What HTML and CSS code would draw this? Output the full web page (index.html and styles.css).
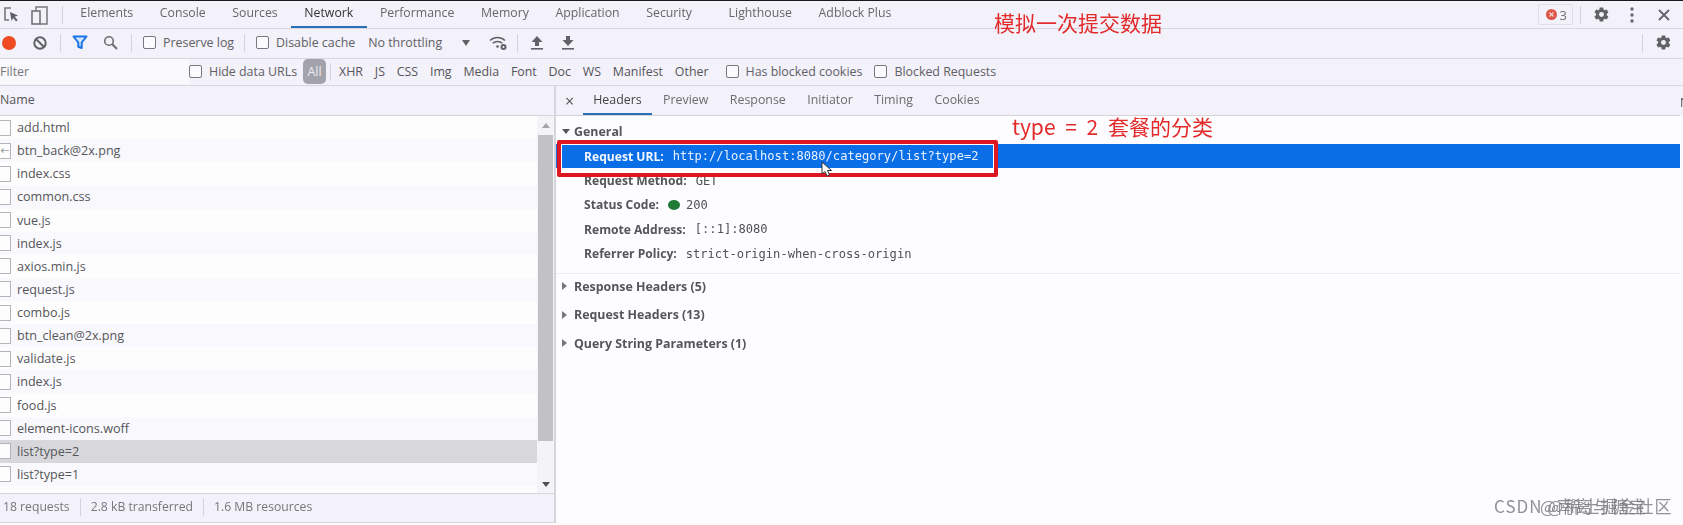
FILE: index.html
```html
<!DOCTYPE html>
<html lang="en">
<head>
<meta charset="utf-8">
<title>DevTools Network</title>
<link rel="stylesheet" href="styles.css">
</head>
<body>
<div class="devtools">
  <header class="bar tabs-bar">
    <svg class="ic ic-inspect" width="20" height="20" viewBox="0 0 20 20"><path d="M9 3H3v12h4" fill="none" stroke="#77777c" stroke-width="1.6"/><path d="M8 7l8 3.5-3.3 1.2 3 3.3-1.6 1.5-2.9-3.4L9.5 16z" fill="#5c6068"/></svg>
    <svg class="ic ic-device" width="18" height="20" viewBox="0 0 18 20"><rect x="1" y="6" width="8" height="13" fill="none" stroke="#6b6b70" stroke-width="1.5"/><path d="M5 6V2h11v17H9" fill="none" stroke="#77777c" stroke-width="1.5"/></svg>
    <span class="sep sep-tabs"></span>
    <nav class="tabs">
      <span class="tab">Elements</span>
      <span class="tab">Console</span>
      <span class="tab">Sources</span>
      <span class="tab active">Network</span>
      <span class="tab">Performance</span>
      <span class="tab">Memory</span>
      <span class="tab">Application</span>
      <span class="tab">Security</span>
      <span class="tab tab-far">Lighthouse</span>
      <span class="tab">Adblock Plus</span>
    </nav>
    <div class="top-right">
      <span class="badge"><svg width="11" height="11" viewBox="0 0 11 11"><circle cx="5.5" cy="5.5" r="5.5" fill="#dd5648"/><path d="M3.5 3.5l4 4m0-4l-4 4" stroke="#f6d5d0" stroke-width="1.2"/></svg>3</span>
      <span class="sep sep-badge"></span>
      <svg class="gear" width="17" height="17" viewBox="0 0 24 24"><path fill="#5f6368" fill-rule="evenodd" d="M19.4 13c.1-.3.1-.7.1-1s0-.7-.1-1l2.1-1.6c.2-.2.2-.4.1-.6l-2-3.5c-.1-.2-.4-.3-.6-.2l-2.5 1c-.5-.4-1.100-.7-1.700-1l-.4-2.600C14.300 2.200 14.100 2 13.900 2h-4c-.2 0-.4.2-.5.400L9 5c-.6.300-1.200.600-1.700 1l-2.500-1c-.2-.1-.5 0-.6.200l-2 3.500c-.1.200-.1.400.1.600L4.400 11c0 .3-.1.700-.1 1s0 .7.100 1l-2.100 1.600c-.2.200-.2.400-.1.600l2 3.500c.1.200.4.300.6.200l2.500-1c.5.400 1.100.700 1.700 1l.4 2.600c.1.300.3.500.5.500h4c.2 0 .4-.2.500-.4l.4-2.600c.6-.3 1.200-.6 1.700-1l2.500 1c.2.100.5 0 .6-.2l2-3.500c.1-.2.100-.4-.1-.6zM12 15.500a3.500 3.500 0 1 1 0-7 3.500 3.500 0 0 1 0 7z"/></svg>
      <svg class="kebab" width="4" height="16" viewBox="0 0 4 16"><circle cx="2" cy="2" r="1.700" fill="#66696e"/><circle cx="2" cy="8" r="1.700" fill="#66696e"/><circle cx="2" cy="14" r="1.700" fill="#66696e"/></svg>
      <svg class="close" width="12" height="12" viewBox="0 0 12 12"><path d="M1 1l10 10M11 1L1 11" stroke="#5f6368" stroke-width="1.800"/></svg>
    </div>
  </header>

  <div class="bar tool-bar">
    <span class="record"></span>
    <svg class="ic-block" width="14" height="14" viewBox="0 0 14 14"><circle cx="7" cy="7" r="5.700" fill="none" stroke="#5f6368" stroke-width="2"/><path d="M3 3l8 8" stroke="#5f6368" stroke-width="2"/></svg>
    <span class="sep sep-a"></span>
    <svg class="ic-filter" width="16" height="15" viewBox="0 0 16 15"><path d="M1.500 1.500h13L9.700 7.500v5.500l-3.400-1.200V7.500z" fill="#d6e6fb" stroke="#1a73e8" stroke-width="2" stroke-linejoin="round"/></svg>
    <svg class="ic-search" width="15" height="15" viewBox="0 0 15 15"><circle cx="6" cy="6" r="4.300" fill="none" stroke="#6b6e73" stroke-width="1.600"/><path d="M9.300 9.300l4.700 4.700" stroke="#6b6e73" stroke-width="2"/></svg>
    <span class="sep sep-b"></span>
    <label class="check check-preserve"><span class="box"></span>Preserve log</label>
    <span class="sep sep-c"></span>
    <label class="check check-cache"><span class="box"></span>Disable cache</label>
    <span class="throttle">No throttling</span>
    <span class="caret"></span>
    <svg class="ic-wifi" width="19" height="16" viewBox="0 0 19 16"><path d="M1 5.500a11 11 0 0 1 15 0M3.700 8.300a7 7 0 0 1 9.600 0" fill="none" stroke="#606367" stroke-width="1.500"/><circle cx="8.500" cy="11.500" r="1.300" fill="#606367"/><circle cx="14.500" cy="12" r="3" fill="#606367"/><circle cx="14.500" cy="12" r="1" fill="#f3f1f9"/></svg>
    <span class="sep sep-d"></span>
    <svg class="ic-up" width="12" height="14" viewBox="0 0 12 14"><path d="M6 0l5.500 6H8v4H4V6H.5z" fill="#5f6368"/><rect y="12" width="12" height="1.600" fill="#5f6368"/></svg>
    <svg class="ic-down" width="12" height="14" viewBox="0 0 12 14"><path d="M4 0h4v4h3.500L6 10 .5 4H4z" fill="#5f6368"/><rect y="12" width="12" height="1.600" fill="#5f6368"/></svg>
    <span class="sep sep-e"></span>
    <svg class="gear gear-tool" width="17" height="17" viewBox="0 0 24 24"><path fill="#5f6368" fill-rule="evenodd" d="M19.400 13c.1-.3.1-.7.1-1s0-.7-.1-1l2.100-1.600c.2-.2.2-.4.1-.6l-2-3.500c-.1-.2-.4-.3-.6-.2l-2.500 1c-.5-.4-1.100-.7-1.700-1l-.4-2.600C14.300 2.200 14.100 2 13.900 2h-4c-.2 0-.4.2-.5.400L9 5c-.6.300-1.200.600-1.700 1l-2.500-1c-.2-.1-.5 0-.6.200l-2 3.500c-.1.200-.1.400.1.600L4.400 11c0 .3-.1.700-.1 1s0 .7.100 1l-2.100 1.600c-.2.200-.2.400-.1.600l2 3.500c.1.200.4.300.6.200l2.500-1c.5.400 1.100.700 1.700 1l.4 2.600c.1.300.3.500.5.500h4c.2 0 .4-.2.500-.4l.4-2.600c.6-.3 1.200-.6 1.700-1l2.500 1c.2.100.5 0 .6-.2l2-3.500c.1-.2.100-.4-.1-.6zM12 15.500a3.500 3.500 0 1 1 0-7 3.500 3.500 0 0 1 0 7z"/></svg>
  </div>

  <div class="bar filter-bar">
    <span class="filter-input">Filter</span>
    <label class="check check-hide"><span class="box"></span>Hide data URLs</label>
    <span class="pill">All</span>
    <span class="sep sep-f"></span>
    <div class="types">
      <span>XHR</span><span>JS</span><span>CSS</span><span>Img</span><span>Media</span><span>Font</span><span>Doc</span><span>WS</span><span>Manifest</span><span>Other</span>
    </div>
    <label class="check check-blocked"><span class="box"></span>Has blocked cookies</label>
    <label class="check check-requests"><span class="box"></span>Blocked Requests</label>
  </div>

  <main class="split">
    <section class="list-pane">
      <div class="name-head">Name</div>
      <div class="list-wrap">
        <ul class="rows">
          <li><i class="file"></i>add.html</li>
          <li><i class="file back">←</i>btn_back@2x.png</li>
          <li><i class="file"></i>index.css</li>
          <li><i class="file"></i>common.css</li>
          <li><i class="file"></i>vue.js</li>
          <li><i class="file"></i>index.js</li>
          <li><i class="file"></i>axios.min.js</li>
          <li><i class="file"></i>request.js</li>
          <li><i class="file"></i>combo.js</li>
          <li><i class="file"></i>btn_clean@2x.png</li>
          <li><i class="file"></i>validate.js</li>
          <li><i class="file"></i>index.js</li>
          <li><i class="file"></i>food.js</li>
          <li><i class="file"></i>element-icons.woff</li>
          <li class="selected"><i class="file"></i>list?type=2</li>
          <li><i class="file"></i>list?type=1</li>
        </ul>
        <div class="scrollbar">
          <span class="arrow arrow-up"></span>
          <span class="thumb"></span>
          <span class="arrow arrow-down"></span>
        </div>
      </div>
      <footer class="status">
        <span>18 requests</span><span class="sep"></span><span>2.8 kB transferred</span><span class="sep"></span><span>1.6 MB resources</span>
      </footer>
    </section>

    <section class="detail-pane">
      <div class="detail-tabs">
        <span class="x">×</span>
        <span class="dtab active">Headers</span>
        <span class="dtab">Preview</span>
        <span class="dtab">Response</span>
        <span class="dtab">Initiator</span>
        <span class="dtab">Timing</span>
        <span class="dtab">Cookies</span>
      </div>
      <div class="general">
        <h3 class="sec-title"><i class="tri down"></i>General</h3>
        <div class="kv kv-selected"><b>Request URL:</b><code>http://localhost:8080/category/list?type=2</code></div>
        <div class="kv"><b>Request Method:</b><code>GET</code></div>
        <div class="kv"><b>Status Code:</b><i class="dot"></i><code>200</code></div>
        <div class="kv"><b>Remote Address:</b><code>[::1]:8080</code></div>
        <div class="kv"><b>Referrer Policy:</b><code>strict-origin-when-cross-origin</code></div>
      </div>
      <h3 class="sec-title closed"><i class="tri"></i>Response Headers (5)</h3>
      <h3 class="sec-title closed"><i class="tri"></i>Request Headers (13)</h3>
      <h3 class="sec-title closed"><i class="tri"></i>Query String Parameters (1)</h3>
    </section>
    <aside class="edge">N</aside>
  </main>
</div>

<div class="note note-top">模拟一次提交数据</div>
<div class="note note-type">type = 2 套餐的分类</div>
<div class="red-box"></div>
<svg class="cursor" width="14" height="17" viewBox="0 0 14 17"><path d="M1 1v12l3-2.500 2 4.500 2.500-1-2-4.500h4z" fill="#fff" stroke="#333" stroke-width="1"/></svg>
<div class="mark mark-a">CSDN @稀土掘金社区</div>
<div class="mark mark-b">@南离与糖宝</div>
</body>
</html>
```
FILE: styles.css
```css
* { box-sizing: border-box; }
html, body { margin: 0; padding: 0; }
body {
  width: 1683px;
  height: 525px;
  overflow: hidden;
  background: #fdfcfe;
  font-family: "Open Sans", "Noto Sans CJK SC", sans-serif;
  font-size: 12.4px;
  color: #55555a;
}
.devtools {
  height: 523px;
  border-top: 1px solid #1a1a1a;
  display: flex;
  flex-direction: column;
  filter: blur(0.35px);
}
.bar {
  display: flex;
  align-items: center;
  flex: none;
  background: #f3f1f9;
  border-bottom: 1px solid #d8d7de;
  overflow: hidden;
}
.sep { flex: none; width: 1px; height: 18px; background: #d4d3da; }

.tabs-bar { height: 28px; position: relative; }
.ic-inspect { margin-left: 2px; flex: none; }
.ic-device { margin-left: 9px; flex: none; }
.sep-tabs { margin-left: 13px; }
.tabs { display: flex; height: 100%; margin-left: 4px; }
.tab {
  display: flex;
  align-items: center;
  padding: 0 13.3px 2px;
  white-space: nowrap;
  color: #66666b;
  font-size: 12.3px;
  border-bottom: 2px solid transparent;
}
.tab.active { color: #333338; border-bottom-color: #2a70b8; }
.tab-far { margin-left: 10px; }
.top-right { margin-left: auto; display: flex; align-items: center; }
.badge {
  display: flex;
  align-items: center;
  gap: 3px;
  height: 21px;
  padding: 0 5px 0 7px;
  border: 1px solid #e0dfe5;
  border-radius: 2px;
  font-size: 13px;
  color: #707075;
}
.sep-badge { margin-left: 7px; }
.top-right .gear { margin-left: 12px; }
.kebab { margin-left: 20px; }
.close { margin-left: 24px; margin-right: 13px; }

.tool-bar { height: 30px; padding-bottom: 2px; }
.record { flex: none; width: 14px; height: 14px; margin-left: 2px; border-radius: 50%; background: #f04a22; }
.ic-block { margin-left: 17px; flex: none; }
.sep-a { margin-left: 13px; }
.ic-filter { margin-left: 11px; flex: none; }
.ic-search { margin-left: 15px; flex: none; }
.sep-b { margin-left: 13px; }
.check { display: flex; align-items: center; gap: 7px; white-space: nowrap; color: #606065; }
.box { flex: none; width: 13px; height: 13px; border: 1px solid #77777c; border-radius: 2px; background: #fbfafd; }
.check-preserve { margin-left: 11px; }
.sep-c { margin-left: 10px; }
.check-cache { margin-left: 11px; }
.throttle { margin-left: 13px; color: #606065; }
.caret { margin-left: 20px; width: 0; height: 0; border-left: 4px solid transparent; border-right: 4px solid transparent; border-top: 6px solid #5f6368; }
.ic-wifi { margin-left: 19px; flex: none; }
.sep-d { margin-left: 9px; }
.ic-up { margin-left: 13px; flex: none; }
.ic-down { margin-left: 19px; flex: none; }
.sep-e { margin-left: auto; }
.gear-tool { margin-left: 12px; margin-right: 11px; flex: none; }

.filter-bar { height: 27px; padding-bottom: 1px; }
.filter-input { width: 189px; flex: none; align-self: stretch; display: flex; align-items: center; background: #f9f8fc; color: #77777c; }
.pill {
  flex: none;
  margin-left: 6px;
  width: 23px;
  height: 25px;
  display: flex;
  align-items: center;
  justify-content: center;
  border-radius: 5px;
  background: #a3a3ab;
  color: #eeeef2;
}
.sep-f { margin-left: 4px; }
.types { display: flex; gap: 11.8px; margin-left: 8px; white-space: nowrap; color: #55555a; }
.check-blocked { margin-left: 17px; }
.check-requests { margin-left: 12px; }

.split { flex: 1; min-height: 0; display: flex; }
.list-pane { width: 556px; flex: none; display: flex; flex-direction: column; border-right: 2px solid #d6d5db; }
.name-head, .detail-tabs { height: 30px; flex: none; background: #f3f1f9; border-bottom: 1px solid #d5d4da; }
.name-head { display: flex; align-items: center; padding-bottom: 2px; color: #55555a; }
.list-wrap { flex: 1; min-height: 0; display: flex; overflow: hidden; }
.rows { flex: 1; margin: 0; padding: 0; list-style: none; }
.rows li { height: 23.130px; display: flex; align-items: center; color: #55555a; background: #fdfdfe; font-size: 12.6px; }
.rows li:nth-child(even) { background: #f9f8fc; }
.rows li.selected { background: #d8d8dc; }
.file {
  flex: none;
  width: 11px;
  height: 16px;
  margin-right: 6px;
  border: 1px solid #b4b4b9;
  border-left: 0;
  background: #fdfdfe;
  font-style: normal;
  font-size: 9px;
  line-height: 14px;
  text-align: center;
  color: #77777c;
}
.scrollbar { flex: none; width: 17px; display: flex; flex-direction: column; align-items: center; background: #f4f3f7; }
.thumb { width: 15px; height: 306px; background: #c2c2c5; }
.arrow { width: 0; height: 0; border-left: 4px solid transparent; border-right: 4px solid transparent; }
.arrow-up { margin: 7px 0 7px; border-bottom: 5px solid #a5a5a8; }
.arrow-down { margin-top: 41px; border-top: 5px solid #505055; }
.status {
  height: 30px;
  flex: none;
  display: flex;
  align-items: center;
  gap: 10px;
  padding-left: 3px;
  background: #f3f1f9;
  border-top: 1px solid #d5d4da;
  border-bottom: 1px solid #d5d4da;
  color: #77777c;
  font-size: 12.2px;
  padding-bottom: 3px;
}

.detail-pane { flex: 1; min-width: 0; }
.detail-tabs { display: flex; align-items: stretch; padding-top: 1px; }
.x { display: flex; align-items: center; margin-left: 9px; width: 18px; font-size: 16px; color: #555; }
.dtab {
  display: flex;
  align-items: center;
  padding: 0 10.2px 2px;
  color: #6c6c71;
  border-bottom: 2px solid transparent;
}
.dtab + .dtab { margin-left: 1px; }
.dtab.active { color: #44444a; border-bottom-color: #2a70b8; }
.general { height: 158px; padding-top: 2px; border-bottom: 1px solid #eeeef1; }
.sec-title { display: flex; align-items: center; height: 26px; margin: 0; padding-left: 6px; font-size: 12.4px; font-weight: 700; color: #55555a; }
.sec-title.closed { height: 28.500px; position: relative; top: -2px; }
.tri { flex: none; width: 0; height: 0; margin-right: 7px; border-top: 4px solid transparent; border-bottom: 4px solid transparent; border-left: 5px solid #77777c; }
.tri.down { margin-right: 4px; border-left: 4px solid transparent; border-right: 4px solid transparent; border-top: 5px solid #55555a; border-bottom: 0; }
.kv { display: flex; align-items: center; height: 24.4px; padding-left: 28px; white-space: nowrap; color: #55555a; }
.kv b { font-weight: 700; margin-right: 9px; font-size: 12.1px; }
.kv code { font-family: "DejaVu Sans Mono", monospace; font-size: 12.1px; color: #505055; }
.kv-selected { background: #0a6ee6; color: #f4f8ff; }
.kv-selected code { color: #eaf2ff; }
.dot { flex: none; width: 12px; height: 10px; margin-right: 6px; border-radius: 50%; background: #1e7a35; }
.edge { flex: none; width: 3px; overflow: hidden; padding-top: 8px; color: #55555a; background: #f3f1f9; height: 30px; }

.note { position: absolute; color: #e22a2a; white-space: nowrap; font-family: "Noto Sans CJK SC", sans-serif; }
.note-top { left: 994px; top: 8px; font-size: 21px; line-height: 28px; }
.note-type { left: 1012px; top: 112px; font-size: 21px; line-height: 28px; word-spacing: 5px; }
.red-box { position: absolute; left: 557px; top: 140px; width: 441px; height: 37px; border: 4px solid #de1620; border-radius: 2px; box-shadow: inset 0 0 0 1px #fff; }
.cursor { position: absolute; left: 821px; top: 161px; }
.mark { position: absolute; color: #77777a; white-space: nowrap; font-family: "Noto Sans CJK SC", sans-serif; font-size: 17px; line-height: 22px; opacity: .8; letter-spacing: 1px; }
.mark-a { left: 1494px; top: 495px; }
.mark-b { left: 1540px; top: 495px; }
```
